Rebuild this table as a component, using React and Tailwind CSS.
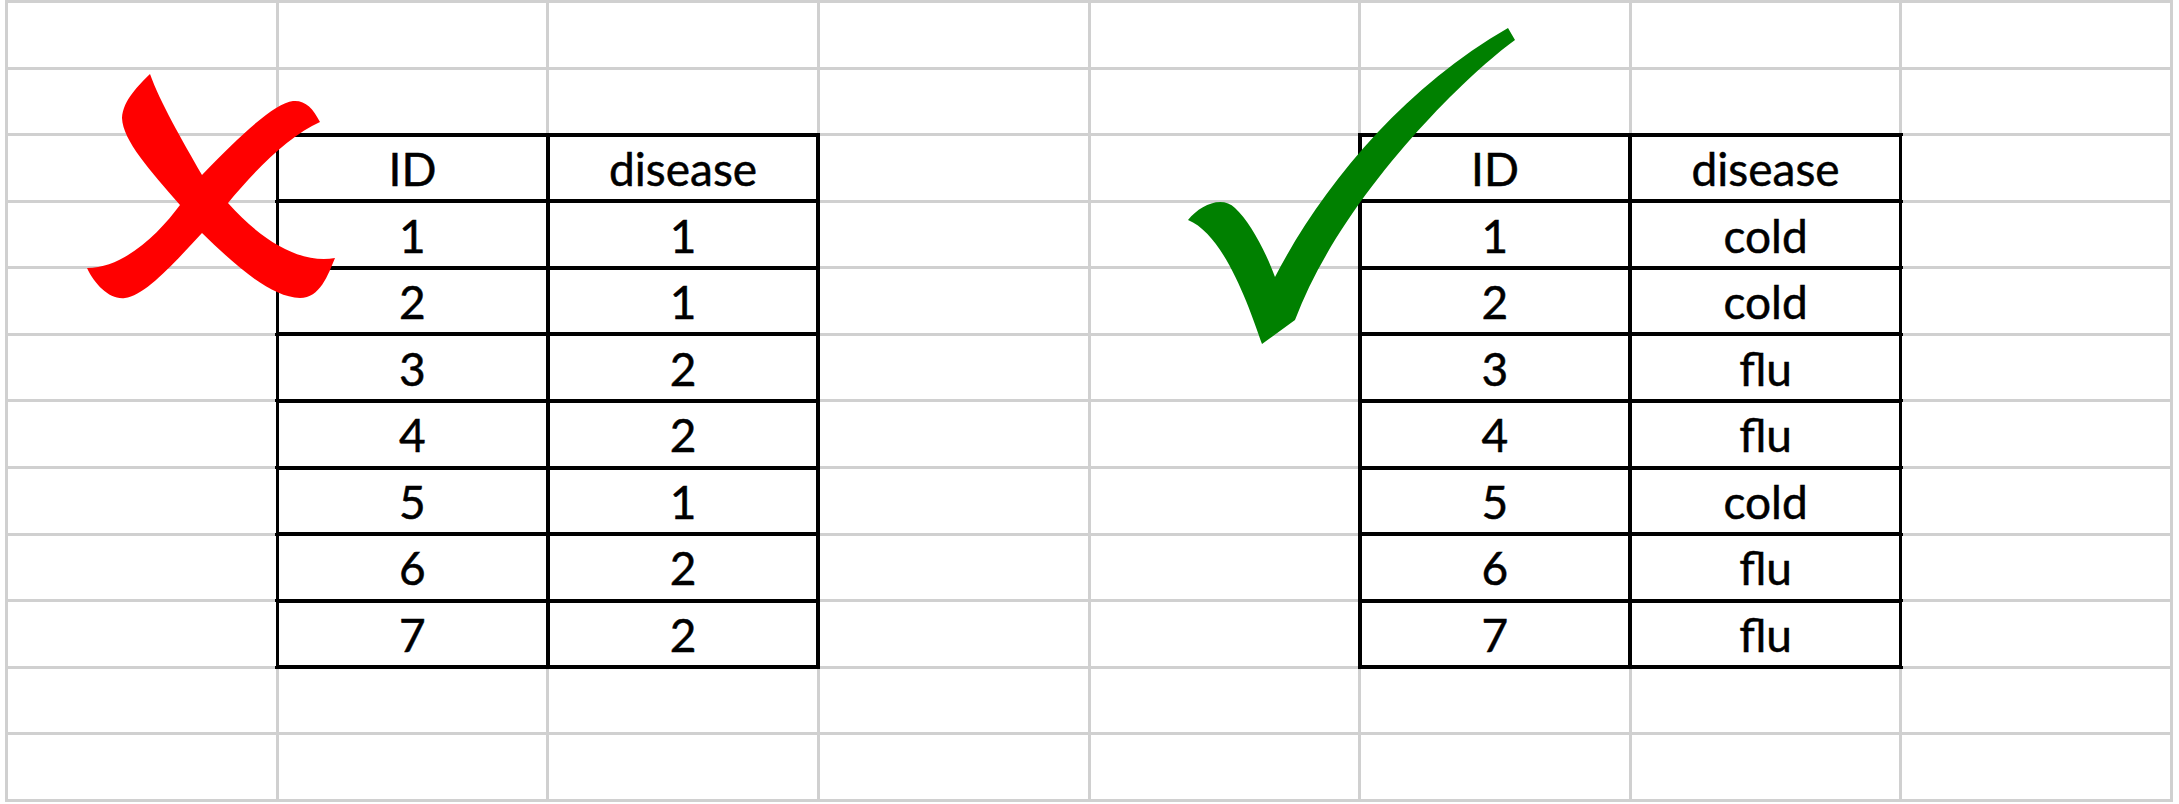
import React from "react";

const wrongRows = [
  ["1", "1"],
  ["2", "1"],
  ["3", "2"],
  ["4", "2"],
  ["5", "1"],
  ["6", "2"],
  ["7", "2"],
];

const rightRows = [
  ["1", "cold"],
  ["2", "cold"],
  ["3", "flu"],
  ["4", "flu"],
  ["5", "cold"],
  ["6", "flu"],
  ["7", "flu"],
];

const DataTable = ({ rows, className = "" }) => (
  <div
    className={`-m-[3.5px] grid grid-cols-2 grid-rows-[repeat(8,minmax(0,1fr))] gap-[4px] bg-black p-[4px] ${className}`}
  >
    {[["ID", "disease"], ...rows].map(([id, disease], i) => (
      <React.Fragment key={i}>
        <div className="flex items-center justify-center bg-white pt-[2px]">{id}</div>
        <div className="flex items-center justify-center bg-white pt-[2px]">{disease}</div>
      </React.Fragment>
    ))}
  </div>
);

export default function App() {
  // 8 x 12 sheet, 2 tables take 16 cells each
  const fillers = Array.from({ length: 96 - 32 });

  return (
    <div className="relative h-[804px] w-[2179px] overflow-hidden bg-white font-['Lato','Liberation_Sans',sans-serif] text-[46px] leading-none text-black [-webkit-text-stroke:0.5px_black]">
      <div className="ml-[5px] grid h-[802px] w-[2168px] grid-cols-[repeat(8,minmax(0,1fr))] grid-rows-[repeat(12,minmax(0,1fr))] gap-[3px] bg-[#d0d0d0] p-[3px]">
        <DataTable rows={wrongRows} className="col-span-2 col-start-2 row-span-8 row-start-3" />
        <DataTable rows={rightRows} className="col-span-2 col-start-6 row-span-8 row-start-3" />
        {fillers.map((_, i) => (
          <div key={i} className="bg-white" />
        ))}
      </div>

      {/* marks drawn over the sheet */}
      <svg
        className="pointer-events-none absolute inset-0"
        width="2179"
        height="804"
        viewBox="0 0 2179 804"
      >
        <path
          fill="#ff0000"
          d="M150,74 C139,85 123,100 122,118 C123,141 150,170 180,205 C160,232 125,268 87,268 C95,285 110,300 125,298 C145,296 175,262 202,233 C235,265 270,297 300,298 C320,298 328,275 335,258 C305,264 265,245 228,203 C255,170 290,135 320,122 C313,108 305,100 293,101 C275,103 240,135 202,175 C182,140 160,102 150,74 Z"
        />
        <path
          fill="#008000"
          d="M1508,28 L1515,40 C1460,80 1340,200 1295,320 L1262,344 C1250,310 1225,235 1188,220 C1200,205 1222,195 1235,208 C1250,222 1265,250 1275,277 C1320,190 1400,90 1508,28 Z"
        />
      </svg>
    </div>
  );
}
